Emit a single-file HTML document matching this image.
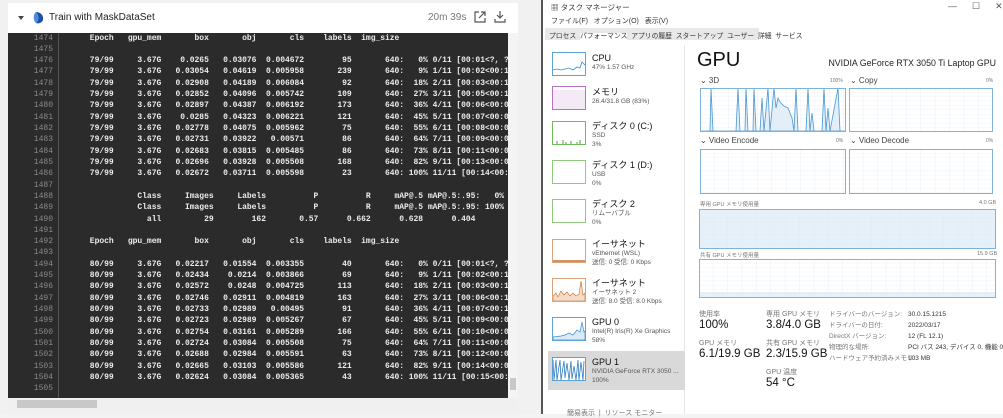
<!DOCTYPE html>
<html><head><meta charset="utf-8">
<style>
*{margin:0;padding:0;box-sizing:border-box}
body{width:1003px;height:414px;overflow:hidden;background:#f3f3f3;position:relative;font-family:"Liberation Sans","Noto Sans CJK JP",sans-serif}
.a{position:absolute}
#left{left:0;top:0;width:541px;height:414px;background:#f1f1f1}
#card{left:8px;top:3px;width:510px;height:30px;background:#fff}
#con{left:8px;top:33px;width:500px;height:365px;background:#2b2b2b;overflow:hidden}
#ln{left:0;top:-0.5px;width:45px;text-align:right;font:8px/11.32px "Liberation Mono",monospace;color:#8a8a8a;white-space:pre}
#sep{left:50px;top:0;width:1px;height:365px;background:#555}
#code{left:58px;top:-0.5px;font:bold 8px/11.32px "Liberation Mono",monospace;letter-spacing:-0.04px;color:#ececec;white-space:pre}
#tm{left:541px;top:0;width:462px;height:414px;background:#fff;border-left:2px solid #555}
.s{font-size:7px;color:#333;white-space:nowrap}
.g{color:#777}
.th{position:absolute;left:9px;width:34px;height:24px;border:1px solid}
.it{position:absolute;left:49px;font-size:9px;color:#111;line-height:10px;white-space:nowrap}
.it span{display:block;font-size:6.5px;color:#555;line-height:9px}
.big{font-size:11.5px;color:#111;white-space:nowrap}
</style></head><body>
<div id="left" class="a"></div>
<div id="card" class="a">
 <div class="a" style="left:10px;top:13px;width:0;height:0;border-left:3px solid transparent;border-right:3px solid transparent;border-top:4px solid #444"></div>
 <svg class="a" style="left:24px;top:8px" width="12" height="13" viewBox="0 0 12 13"><path d="M4 1C9 1 12 5 11 9C10 12 6 13 4 12C7 10 7 4 4 1Z" fill="#1f4fa8"/><path d="M4 1C1 3 1 10 4 12C7 10 7 4 4 1Z" fill="#4a8fe0"/></svg>
 <div class="a" style="left:41px;top:9px;font-size:10px;color:#222">Train with MaskDataSet</div>
 <div class="a" style="left:420px;top:9px;font-size:10px;color:#777">20m 39s</div>
 <svg class="a" style="left:466px;top:8px" width="12" height="12" viewBox="0 0 12 12" fill="none" stroke="#555" stroke-width="1.2"><path d="M5 1H1V11H11V7M7 1H11V5M11 1L5 7"/></svg>
 <svg class="a" style="left:486px;top:7px" width="12" height="13" viewBox="0 0 12 13" fill="none" stroke="#555" stroke-width="1.2"><path d="M6 1V8M3 5L6 8L9 5M1 9V12H11V9"/></svg>
</div>
<div id="con" class="a">
<div id="ln" class="a">1474
1475
1476
1477
1478
1479
1480
1481
1482
1483
1484
1485
1486
1487
1488
1489
1490
1491
1492
1493
1494
1495
1496
1497
1498
1499
1500
1501
1502
1503
1504
1505</div>
<div id="sep" class="a"></div>
<div id="code" class="a">     Epoch   gpu_mem       box       obj       cls    labels  img_size

     79/99     3.67G    0.0265   0.03076  0.004672        95       640:   0% 0/11 [00:01&lt;?, ?it/s]
     79/99     3.67G   0.03054   0.04619  0.005958       239       640:   9% 1/11 [00:02&lt;00:14,  1.46s/it]
     79/99     3.67G   0.02908   0.04189  0.006084        92       640:  18% 2/11 [00:03&lt;00:12,  1.40s/it]
     79/99     3.67G   0.02852   0.04096  0.005742       109       640:  27% 3/11 [00:05&lt;00:10,  1.37s/it]
     79/99     3.67G   0.02897   0.04387  0.006192       173       640:  36% 4/11 [00:06&lt;00:09,  1.35s/it]
     79/99     3.67G    0.0285   0.04323  0.006221       121       640:  45% 5/11 [00:07&lt;00:08,  1.34s/it]
     79/99     3.67G   0.02778   0.04075  0.005962        75       640:  55% 6/11 [00:08&lt;00:06,  1.33s/it]
     79/99     3.67G   0.02731   0.03922   0.00571        86       640:  64% 7/11 [00:09&lt;00:05,  1.33s/it]
     79/99     3.67G   0.02683   0.03815  0.005485        86       640:  73% 8/11 [00:11&lt;00:04,  1.33s/it]
     79/99     3.67G   0.02696   0.03928  0.005508       168       640:  82% 9/11 [00:13&lt;00:02,  1.33s/it]
     79/99     3.67G   0.02672   0.03711  0.005598        23       640: 100% 11/11 [00:14&lt;00:00,  1.33s/it]

               Class     Images     Labels          P          R     mAP@.5 mAP@.5:.95:   0% 0/1 [00:00&lt;?, ?it/s]
               Class     Images     Labels          P          R     mAP@.5 mAP@.5:.95: 100% 1/1 [00:00&lt;00:00]
                 all         29        162       0.57      0.662      0.628      0.404

     Epoch   gpu_mem       box       obj       cls    labels  img_size

     80/99     3.67G   0.02217   0.01554  0.003355        40       640:   0% 0/11 [00:01&lt;?, ?it/s]
     80/99     3.67G   0.02434    0.0214  0.003866        69       640:   9% 1/11 [00:02&lt;00:12,  1.46s/it]
     80/99     3.67G   0.02572    0.0248  0.004725       113       640:  18% 2/11 [00:03&lt;00:10,  1.40s/it]
     80/99     3.67G   0.02746   0.02911  0.004819       163       640:  27% 3/11 [00:06&lt;00:10,  1.37s/it]
     80/99     3.67G   0.02733   0.02989   0.00495        91       640:  36% 4/11 [00:07&lt;00:10,  1.35s/it]
     80/99     3.67G   0.02723   0.02989  0.005267        67       640:  45% 5/11 [00:09&lt;00:08,  1.34s/it]
     80/99     3.67G   0.02754   0.03161  0.005289       166       640:  55% 6/11 [00:10&lt;00:06,  1.33s/it]
     80/99     3.67G   0.02724   0.03084  0.005508        75       640:  64% 7/11 [00:11&lt;00:05,  1.33s/it]
     80/99     3.67G   0.02688   0.02984  0.005591        63       640:  73% 8/11 [00:12&lt;00:04,  1.33s/it]
     80/99     3.67G   0.02665   0.03103  0.005586       121       640:  82% 9/11 [00:14&lt;00:02,  1.33s/it]
     80/99     3.67G   0.02624   0.03084  0.005365        43       640: 100% 11/11 [00:15&lt;00:00,  1.33s/it]
</div>
</div>
<div class="a" style="left:508px;top:33px;width:10px;height:365px;background:#f4f4f4"></div>
<div class="a" style="left:510px;top:378px;width:6px;height:12px;background:#c8c8c8"></div>
<div class="a" style="left:8px;top:398px;width:510px;height:12px;background:#f0f0f0"></div>
<div class="a" style="left:17px;top:400px;width:80px;height:8px;background:#c8c8c8"></div>

<div id="tm" class="a">
 <div class="a s" style="left:8px;top:2px;font-size:7.5px">▦ タスク マネージャー</div>
 <div class="a s" style="left:405px;top:1px;font-size:9px;color:#555">—&nbsp;&nbsp;&nbsp;&nbsp;&nbsp;&nbsp;☐&nbsp;&nbsp;&nbsp;&nbsp;&nbsp;&nbsp;✕</div>
 <div class="a s" style="left:8px;top:16px">ファイル(F)&nbsp;&nbsp;&nbsp;オプション(O)&nbsp;&nbsp;&nbsp;表示(V)</div>
 <div class="a" style="left:2px;top:28px;width:214px;height:12px;background:#e8e8e8"></div>
 <div class="a s" style="left:6px;top:30px;font-size:6.8px">プロセス&nbsp; <span style="background:#fff">パフォーマンス</span>&nbsp; アプリの履歴&nbsp; スタートアップ&nbsp; ユーザー&nbsp; 詳細&nbsp; サービス</div>
 <div class="a" style="left:141px;top:45px;width:1px;height:369px;background:#e6e6e6"></div>
 <div class="th" style="top:52px;border-color:#5aa3d6"><svg width="32" height="22"><polyline points="0,17 4,16 8,17 12,16 16,15 20,17 24,14 27,15 29,9 32,12" fill="none" stroke="#3d8fcf" stroke-width="0.8"/></svg></div>
 <div class="it" style="top:53px">CPU<span>47% 1.57 GHz</span></div>
 <div class="th" style="top:86px;border-color:#b96fc4;background:linear-gradient(#fff 0 3px,#f3eaf5 3px)"></div>
 <div class="it" style="top:87px">メモリ<span>26.4/31.8 GB (83%)</span></div>
 <div class="th" style="top:121px;border-color:#6dbb5c"><svg width="32" height="22"><path d="M4 22V19M10 22V18M13 22V20M18 22V19M24 22V20M27 22V18" stroke="#4ca23a"/></svg></div>
 <div class="it" style="top:121px">ディスク 0 (C:)<span>SSD</span><span>3%</span></div>
 <div class="th" style="top:160px;border-color:#8ccb7e"></div>
 <div class="it" style="top:160px">ディスク 1 (D:)<span>USB</span><span>0%</span></div>
 <div class="th" style="top:199px;border-color:#8ccb7e"></div>
 <div class="it" style="top:199px">ディスク 2<span>リムーバブル</span><span>0%</span></div>
 <div class="th" style="top:239px;border-color:#dca27a"><svg width="32" height="22"><path d="M0 21H32" stroke="#c66b2c" stroke-width="1.5"/></svg></div>
 <div class="it" style="top:239px">イーサネット<span>vEthernet (WSL)</span><span>送信: 0 受信: 0 Kbps</span></div>
 <div class="th" style="top:278px;border-color:#dca27a"><svg width="32" height="22"><polygon points="0,22 0,17 3,14 5,18 8,12 11,16 14,13 17,17 20,14 23,17 26,15 28,2 30,16 32,14 32,22" fill="#f5dcc8" stroke="#c66b2c" stroke-width="0.6"/></svg></div>
 <div class="it" style="top:278px">イーサネット<span>イーサネット 2</span><span>送信: 8.0 受信: 8.0 Kbps</span></div>
 <div class="th" style="top:317px;border-color:#5aa3d6"><svg width="32" height="22"><polygon points="0,22 0,19 8,18 12,17 16,15 20,17 24,12 27,14 29,4 31,14 32,13 32,22" fill="#dceaf6" stroke="#3d8fcf" stroke-width="0.7"/></svg></div>
 <div class="it" style="top:317px">GPU 0<span>Intel(R) Iris(R) Xe Graphics</span><span>58%</span></div>
 <div class="a" style="left:5px;top:351px;width:137px;height:39px;background:#d9d9d9"></div>
 <div class="th" style="top:357px;border-color:#5aa3d6;background:#fff"><svg width="32" height="22"><polyline points="0,2 1,22 3,2 4,22 7,2 8,22 11,3 12,20 14,5 16,22 18,3 19,21 21,8 23,22 25,2 26,22 28,4 30,22 31,3" fill="none" stroke="#2f7fc0" stroke-width="0.8"/></svg></div>
 <div class="it" style="top:357px">GPU 1<span>NVIDIA GeForce RTX 3050 ...</span><span>100%</span></div>
 <div class="a s g" style="left:24px;top:408px">簡易表示&nbsp;&nbsp;|&nbsp;&nbsp;リソース モニター</div>
 <div class="a" style="left:154px;top:49px;font-size:20px;color:#111">GPU</div>
 <div class="a" style="left:250px;top:58px;width:203px;text-align:right;font-size:8.8px;color:#222;white-space:nowrap">NVIDIA GeForce RTX 3050 Ti Laptop GPU</div>
 <div class="a s" style="left:157px;top:76px;font-size:8px;color:#444">⌄ 3D</div>
 <div class="a s g" style="left:287px;top:78px;font-size:5px">100%</div>
 <div class="a s" style="left:307px;top:76px;font-size:8px;color:#444">⌄ Copy</div>
 <div class="a s g" style="left:443px;top:78px;font-size:5px">0%</div>
 <svg class="a" style="left:157px;top:88px" width="146" height="44"><defs><pattern id="gr" width="14.4" height="4.4" patternUnits="userSpaceOnUse"><path d="M14.4 0V4.4M0 4.4H14.4" stroke="#d9e8f4" stroke-width="0.6" fill="none"/></pattern></defs><rect width="146" height="44" fill="url(#gr)"/><polygon points="0,43 10,43 11,0 13,43 36,43 38,0 40,43 45,43 46,0 48,43 53,43 54,0 56,43 60,43 62,10 64,43 68,0 70,43 74,0 76,20 78,10 80,14 84,18 88,20 92,30 94,43 96,0 98,43 106,43 108,0 110,43 112,25 114,43 122,43 124,0 126,43 128,20 130,43 138,0 140,43 146,43" fill="#e3eef8" stroke="#4b97d2" stroke-width="0.8"/><rect x="0.5" y="0.5" width="145" height="43" fill="none" stroke="#7fb3dc"/></svg>
 <svg class="a" style="left:306px;top:88px" width="144" height="44"><rect width="144" height="44" fill="url(#gr)"/><rect x="0.5" y="0.5" width="143" height="43" fill="none" stroke="#7fb3dc"/></svg>
 <div class="a s" style="left:157px;top:136px;font-size:8px;color:#444">⌄ Video Encode</div>
 <div class="a s g" style="left:293px;top:138px;font-size:5px">0%</div>
 <div class="a s" style="left:307px;top:136px;font-size:8px;color:#444">⌄ Video Decode</div>
 <div class="a s g" style="left:443px;top:138px;font-size:5px">0%</div>
 <svg class="a" style="left:157px;top:149px" width="146" height="45"><rect width="146" height="45" fill="url(#gr)"/><rect x="0.5" y="0.5" width="145" height="44" fill="none" stroke="#7fb3dc"/></svg>
 <svg class="a" style="left:306px;top:149px" width="144" height="45"><rect width="144" height="45" fill="url(#gr)"/><rect x="0.5" y="0.5" width="143" height="44" fill="none" stroke="#7fb3dc"/></svg>
 <div class="a s g" style="left:157px;top:200px;font-size:5.5px">専用 GPU メモリ使用量</div>
 <div class="a s g" style="left:436px;top:200px;font-size:5.5px">4.0 GB</div>
 <svg class="a" style="left:156px;top:209px" width="297" height="40"><rect width="297" height="40" fill="#e6f0f9"/><rect width="297" height="40" fill="url(#gr)"/><rect x="0.5" y="0.5" width="296" height="39" fill="none" stroke="#7fb3dc"/></svg>
 <div class="a s g" style="left:157px;top:251px;font-size:5.5px">共有 GPU メモリ使用量</div>
 <div class="a s g" style="left:434px;top:251px;font-size:5.5px">15.9 GB</div>
 <svg class="a" style="left:156px;top:259px" width="297" height="39"><rect width="297" height="39" fill="url(#gr)"/><rect x="0" y="33" width="297" height="6" fill="#e6f0f9"/><rect x="0.5" y="0.5" width="296" height="38" fill="none" stroke="#7fb3dc"/></svg>
 <div class="a s g" style="left:156px;top:309px">使用率</div>
 <div class="a big" style="left:156px;top:319px">100%</div>
 <div class="a s g" style="left:156px;top:338px">GPU メモリ</div>
 <div class="a big" style="left:156px;top:348px">6.1/19.9 GB</div>
 <div class="a s g" style="left:223px;top:309px">専用 GPU メモリ</div>
 <div class="a big" style="left:223px;top:319px">3.8/4.0 GB</div>
 <div class="a s g" style="left:223px;top:338px">共有 GPU メモリ</div>
 <div class="a big" style="left:223px;top:348px">2.3/15.9 GB</div>
 <div class="a s g" style="left:223px;top:367px">GPU 温度</div>
 <div class="a big" style="left:223px;top:377px">54 °C</div>
 <div class="a s g" style="left:286px;top:309px;line-height:11px;font-size:6.5px">ドライバーのバージョン:<br>ドライバーの日付:<br>DirectX バージョン:<br>物理的な場所:<br>ハードウェア予約済みメモリ:</div>
 <div class="a s" style="left:365px;top:309px;line-height:11px;font-size:6.5px">30.0.15.1215<br>2022/03/17<br>12 (FL 12.1)<br>PCI バス 243, デバイス 0, 機能 0<br>103 MB</div>
</div>
</body></html>
